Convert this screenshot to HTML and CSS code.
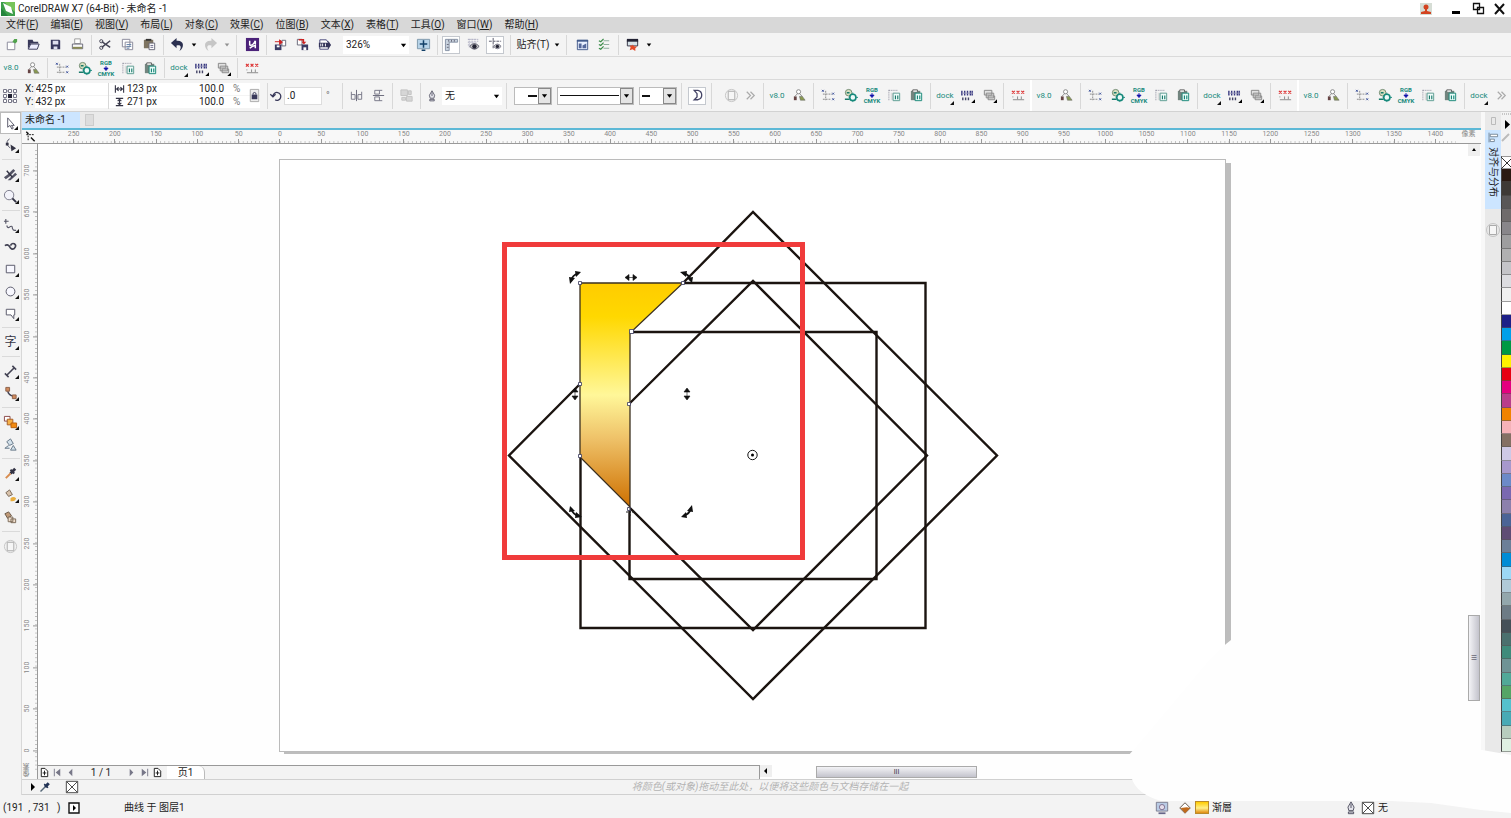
FILE: index.html
```html
<!DOCTYPE html>
<html lang="zh-CN">
<head>
<meta charset="utf-8">
<title>CorelDRAW X7 (64-Bit) - 未命名 -1</title>
<link rel="stylesheet" href="styles.css">
</head>
<body>
<svg class="sprite" aria-hidden="true">
  <symbol id="nodes" viewBox="0 0 16 16"><circle cx="7" cy="4" r="2.200" fill="#fff" stroke="#888"/><path d="M6 6L3 9M8 6l3 3" stroke="#888"/><rect x="2" y="9" width="3" height="4" fill="#644"/><path d="M8 9h3l3 4H9z" fill="#8a9a50" stroke="#666" stroke-width=".6"/></symbol>
  <symbol id="grid" viewBox="0 0 16 16"><path d="M5 3v10M2 6.500h10M2 12h8" stroke="#888" stroke-dasharray="2 1" fill="none"/><path d="M1 2l2 2m0-2L1 4M12 5l2 2m0-2l-2 2M12 11l2 2m0-2l-2 2" stroke="#3a4f9a" fill="none"/></symbol>
  <symbol id="gearr" viewBox="0 0 16 16"><circle cx="6" cy="5" r="3.500" fill="#d8dfc0" stroke="#6f8a70"/><path d="M4 5h3M2 12h5" stroke="#197a6a" stroke-width="1.500"/><circle cx="10.500" cy="10" r="3.300" fill="#eefaf8" stroke="#16897b" stroke-width="1.700"/><path d="M10.500 5v2M10.500 13v2M14 10h2M6 10h1" stroke="#16897b"/></symbol>
  <symbol id="arrow" viewBox="0 0 8 6"><path d="M4 0v3M1.500 2.500h5L4 5.500z" stroke="#11a" fill="#11a"/></symbol>
  <symbol id="ai1" viewBox="0 0 16 16"><path d="M2 2.500h9M2 2v11" stroke="#889" stroke-dasharray="1 1" fill="none"/><path d="M4 5h5v8H4z" fill="#ddd"/><path d="M6.500 5.500h7v8h-7z" fill="#eefaf8" stroke="#5b9b91"/><path d="M9 8v4M11.500 8v4" stroke="#197a6a" stroke-width="1.200"/></symbol>
  <symbol id="ai2" viewBox="0 0 16 16"><path d="M2 3h10v10H2z" fill="#72857f"/><path d="M4 4V2h5v2" fill="#fff" stroke="#555"/><path d="M6.500 5.500h7v8h-7z" fill="#e6faf6" stroke="#188678"/><path d="M9 8v4M11.500 8v4" stroke="#188678" stroke-width="1.200"/></symbol>
  <symbol id="bars" viewBox="0 0 16 16"><path d="M2 3v5M5 3v5M8 3v5M11 3v5M13 3v5" stroke="#36367f" stroke-width="1.500"/><path d="M2 5.500h12" stroke="#99b"/><path d="M3 10v3M6 10v3M9 10v3" stroke="#446" stroke-width="1.500"/><path d="M16 12v4h-4z"/></symbol>
  <symbol id="layers" viewBox="0 0 16 16"><path d="M2.500 2.500h8v5h-8zM4.500 5.500h8v5h-8zM6.500 8.500h7v4h-7z" fill="#e2e2e2" stroke="#888"/><path d="M16 12v4h-4z"/></symbol>
  <symbol id="xxx" viewBox="0 0 16 16"><path d="M1 3l3 3m0-3L1 6M6 3l3 3m0-3L6 6M11 3l3 3m0-3l-3 3" stroke="#d33" stroke-width="1.300" fill="none"/><path d="M2 12.500h12M7 9v3M11 9v3M2 9v1" stroke="#888"/></symbol>
  <symbol id="new" viewBox="0 0 16 16"><path d="M3.500 5.500h8v8h-8z" fill="#fff" stroke="#889"/><path d="M9 5l2-3 3 0 0 3-2 2z" fill="#51a34d"/></symbol>
  <symbol id="open" viewBox="0 0 16 16"><path d="M2 13V3h5l1 2h5v2H5z" fill="#39395a"/><path d="M2.500 13L5 7.500h9L12 13z" fill="#eef" stroke="#39395a"/></symbol>
  <symbol id="save" viewBox="0 0 16 16"><path d="M3 3h9l1 1v9H3z" fill="#34345a"/><path d="M5 4h6v4H5zM6 10h4v3H6z" fill="#dde"/></symbol>
  <symbol id="print" viewBox="0 0 16 16"><path d="M5 2h6v5H5z" fill="#fff" stroke="#999"/><path d="M2.500 7.500h11v5h-11z" fill="#f8f8f8" stroke="#667"/><path d="M3 11.500h10" stroke="#8a8b55" stroke-width="2"/></symbol>
  <symbol id="cut" viewBox="0 0 16 16"><path d="M4 5l9 6M4 11l9-7" stroke="#445" stroke-width="1.600"/><circle cx="3.500" cy="4.500" r="1.700" fill="none" stroke="#445"/><circle cx="3.500" cy="11.500" r="1.700" fill="none" stroke="#445"/></symbol>
  <symbol id="copy" viewBox="0 0 16 16"><path d="M2.500 2.500h8v8h-8zM5.500 5.500h8v8h-8z" fill="#fff" stroke="#889"/><path d="M7 8h5M7 10h5M7 12h3" stroke="#6482aa"/></symbol>
  <symbol id="paste" viewBox="0 0 16 16"><path d="M2 3h10v9H2z" fill="#7e7461"/><path d="M4 2h6v2H4z" fill="#333"/><path d="M7.500 6.500h6v7h-6z" fill="#fff" stroke="#667"/><path d="M9 9h3M9 11h3" stroke="#668"/></symbol>
  <symbol id="undo" viewBox="0 0 16 16"><path d="M7 1L1 6.500 7 12V9c4-1 6 1 3 6 6-4 5-12-3-11z" fill="currentColor"/></symbol>
  <symbol id="search" viewBox="0 0 16 16"><path d="M1 1h14v14H1z" fill="#4b2279"/><path d="M5 4v5M5 9q4 0 6-5M11 4v4M5 12q3-3 6-3v3" stroke="#fff" stroke-width="1.600" fill="none"/></symbol>
  <symbol id="import" viewBox="0 0 16 16"><path d="M9.500 3.500h4v6h-4z" fill="#fff" stroke="#667"/><path d="M2 8h7v6H2z" fill="#3b3b64"/><path d="M4 9h3v2H4z" fill="#fff"/><path d="M2 5h6M7 3l3 2.500L7 8z" stroke="#c22" fill="#c22"/></symbol>
  <symbol id="export" viewBox="0 0 16 16"><path d="M2.500 2.500h5v6h-5z" fill="#fff" stroke="#667"/><path d="M7 8h7v6H7z" fill="#3b3b64"/><path d="M9 11h3v3H9z" fill="#fff"/><path d="M4 3h5v3" stroke="#c22" fill="none" stroke-width="1.500"/><path d="M7 5h5L9.500 8z" fill="#c22"/></symbol>
  <symbol id="publish" viewBox="0 0 16 16"><path d="M3 3h7l2 3v7H3z" fill="#fff" stroke="#447"/><path d="M2 6h10V4l3 4.500L12 13v-2H2z" fill="#34345a"/><path d="M4 7v3M6 7v3M9 7v3" stroke="#fff"/></symbol>
  <symbol id="full" viewBox="0 0 16 16"><path d="M1.500 2.500h13v10h-13z" fill="#b7d3e8" stroke="#7d97ab"/><path d="M8 3.500v8M4 7.500h8M6 14h4" stroke="#124068" stroke-width="1.600"/></symbol>
  <symbol id="rulers" viewBox="0 0 16 16"><path d="M1.500 2.500h13v3h-9v9h-4z" fill="#c9d3df" stroke="#8490a3"/><path d="M5 3v2M8 3v2M11 3v2M3 8h2M3 11h2" stroke="#667"/></symbol>
  <symbol id="eye" viewBox="0 0 16 16"><path d="M2 2.500h10M2 5.500h10M3.500 2v9M6.500 2v6M9.500 2v4M12.500 2v4M2 8.500h3" stroke="#9b9bb5" stroke-dasharray="1 1"/><path d="M4 10q5-6 10 0-5 6-10 0z" fill="#ccc" stroke="#556"/><circle cx="9" cy="10" r="2.400" fill="#223"/></symbol>
  <symbol id="guide" viewBox="0 0 16 16"><path d="M5.500 1v12M1 4.500h13" stroke="#556" stroke-dasharray="3 1"/><path d="M6 10q4-5 8 0-4 5-8 0z" fill="#ccc" stroke="#778"/><circle cx="10" cy="10" r="1.800" fill="#223"/></symbol>
  <symbol id="options" viewBox="0 0 16 16"><path d="M2.500 3.500h11v10h-11z" fill="#e8f0ff" stroke="#445c8c"/><path d="M2 3h12v2H2z" fill="#445c8c"/><path d="M4 7h3v5H4zM8 9l4-2v5H8z" fill="#56699b"/></symbol>
  <symbol id="checks" viewBox="0 0 16 16"><path d="M2 4l2 1 3-3M2 8l2 1 3-3M2 12l2 1 3-3" stroke="#3a8c48" fill="none" stroke-width="1.300"/><path d="M7 4h6M7 8h6M7 12h6" stroke="#8a9"/></symbol>
  <symbol id="launch" viewBox="0 0 16 16"><path d="M2.500 3.500h11v6h-11z" fill="#d8e4ea" stroke="#334"/><path d="M2 2h12v3H2z" fill="#223"/><path d="M8 8l2 2 3 0-2 2 0 3-3-2-3 1 1-3-1-2h3z" fill="#e44b29"/></symbol>
  <symbol id="origin" viewBox="0 0 16 16"><path d="M3 3h10v10H3z" fill="none" stroke="#778" stroke-dasharray="1 1"/><path d="M6 6h4v4H6z" fill="#223"/><path d="M1.500 1.500h3v3h-3zM6.500 1.500h3v3h-3zM11.500 1.500h3v3h-3zM1.500 6.500h3v3h-3zM11.500 6.500h3v3h-3zM1.500 11.500h3v3h-3zM6.500 11.500h3v3h-3zM11.500 11.500h3v3h-3z" fill="#fff" stroke="#778"/></symbol>
  <symbol id="wide" viewBox="0 0 12 10"><path d="M1.500 1v8M10.500 1v8M2 5h8M5 3L3 5l2 2M7 3l2 2-2 2" stroke="#334" fill="none" stroke-width="1.200"/></symbol>
  <symbol id="tall" viewBox="0 0 12 10"><path d="M2 1h8M2 9h8M6 1v8M4 4l2-2 2 2M4 6l2 2 2-2" stroke="#334" fill="none" stroke-width="1.200"/></symbol>
  <symbol id="lock" viewBox="0 0 16 16"><path d="M3.500 1.500h9v13h-9z" fill="#ececec" stroke="#aaa"/><path d="M5 7h6v5H5z" fill="#39395a"/><path d="M6.500 7V5.500q1.500-1.500 3 0V7" fill="none" stroke="#39395a"/></symbol>
  <symbol id="rotate" viewBox="0 0 16 16"><path d="M4.500 8A4.500 4.500 0 1 1 7 12.500M1.500 6l3 3 3-3" stroke="#39395a" fill="none" stroke-width="1.500"/></symbol>
  <symbol id="mirror" viewBox="0 0 16 16"><path d="M2.500 4v8h4V7h-4M13.500 4v8h-4V7h4" stroke="#778" fill="none"/><path d="M8 2v12" stroke="#667"/></symbol>
  <symbol id="order" viewBox="0 0 16 16"><path d="M2 2h7v6H2zM8 9h6v5H8zM10 3h3v4h-3zM3 10h4v3H3z" fill="#d6d6d6" stroke="#c2c2c2"/></symbol>
  <symbol id="pen" viewBox="0 0 16 16"><path d="M8 1L4.500 7l1 4h5l1-4zM5 12.500h6v2H5zM8 3v5" fill="#e3e3ea" stroke="#445"/></symbol>
  <symbol id="close" viewBox="0 0 16 16"><path d="M4.500 2.500h4q4 1 4 5t-4 5h-4l3-3V6z" fill="none" stroke="#446" stroke-width="1.400"/></symbol>
  <symbol id="plus" viewBox="0 0 16 16"><circle cx="8" cy="8" r="6.500" fill="none" stroke="#c4c4c4"/><path d="M4.500 3.500h7v9h-7z" fill="#f6f6f6" stroke="#aaa"/></symbol>
  <symbol id="more" viewBox="0 0 16 16"><path d="M4 4l4 4-4 4M8 4l4 4-4 4" fill="none" stroke="#aaa" stroke-width="1.300"/></symbol>
  <symbol id="down" viewBox="0 0 8 8"><path d="M1 2h6L4 6z"/></symbol>
  <symbol id="pick" viewBox="0 0 16 16"><path d="M5 2v10l2.500-2 2 4 1.500-1-2-3h3z" fill="#fff" stroke="#556"/></symbol>
  <symbol id="shape" viewBox="0 0 16 16"><path d="M7 1q-4 2-2 7l3 3" fill="none" stroke="#556"/><path d="M3 5h3v3H3zM8 7l6 4-5 3z" fill="#334"/></symbol>
  <symbol id="smear" viewBox="0 0 16 16"><path d="M1 11l4-3 6-6 2 2-6 6-4 3zM5 14l8-8 2 2-7 6z" fill="#556"/><path d="M4 4l6 7" stroke="#334" stroke-width="1.500"/></symbol>
  <symbol id="zoom" viewBox="0 0 16 16"><circle cx="6.500" cy="6.500" r="5" fill="#f3f3fa" stroke="#778"/><path d="M10 10l4 4" stroke="#334" stroke-width="2"/></symbol>
  <symbol id="free" viewBox="0 0 16 16"><path d="M3 1v5M1 3.500h5M4 8q1 4 4 1 2-1 2 2 1 3 4 2" stroke="#556" fill="none" stroke-width="1.200"/></symbol>
  <symbol id="artistic" viewBox="0 0 16 16"><path d="M2 6q3-2 5 1 2 4 5 2 3-3 0-5-3-1-4 2" stroke="#445" fill="none" stroke-width="1.800"/></symbol>
  <symbol id="rect" viewBox="0 0 16 16"><path d="M3.500 3.500h9v8h-9z" fill="#f8f8ff" stroke="#556"/></symbol>
  <symbol id="ellipse" viewBox="0 0 16 16"><circle cx="8" cy="8" r="4.700" fill="#f8f8ff" stroke="#556"/></symbol>
  <symbol id="callout" viewBox="0 0 16 16"><path d="M3.500 3.500h9v6h-1v4l-3-4h-5z" fill="#fff" stroke="#556"/></symbol>
  <symbol id="measure" viewBox="0 0 16 16"><path d="M4 12l8-8M2 10l4 4M10 2l4 4" stroke="#445" stroke-width="1.700"/></symbol>
  <symbol id="connect" viewBox="0 0 16 16"><path d="M5 4q0 6 7 7" stroke="#445" fill="none" stroke-width="1.500"/><path d="M3 1.500h4v4H3zM10 9.500h4v4h-4z" fill="#d08a5c" stroke="#8b6049"/></symbol>
  <symbol id="blend" viewBox="0 0 16 16"><path d="M1.500 1.500h6v5h-6z" fill="#fff" stroke="#844"/><path d="M4.500 4.500h6v6h-6z" fill="#f5b24a" stroke="#a65b22"/><path d="M8.500 8.500h6v5h-6z" fill="#f18a11" stroke="#b55e0b"/></symbol>
  <symbol id="glass" viewBox="0 0 16 16"><path d="M4 5l4-3 3 5-4 2zM6 9l-4 3h5M11 9l-3 5h6z" fill="#d2e0ea" stroke="#678"/></symbol>
  <symbol id="dropper" viewBox="0 0 16 16"><path d="M8 8l5-5" stroke="#334" stroke-width="3"/><path d="M8 4l4 4" stroke="#334" stroke-width="2"/><path d="M3 13l5-5" stroke="#d88b4d" stroke-width="2"/></symbol>
  <symbol id="dropper-dark" viewBox="0 0 16 16"><path d="M8 8l5-5" stroke="#235" stroke-width="4"/><path d="M7 4l5 5" stroke="#235" stroke-width="2"/><path d="M2 14l6-6" stroke="#567" stroke-width="2"/></symbol>
  <symbol id="fill" viewBox="0 0 16 16"><path d="M3 5l4-3 3 5-4 2z" fill="#d8c2ab" stroke="#765"/><path d="M8 11q3-3 6 0-1 4-6 3z" fill="#e9ad3c"/></symbol>
  <symbol id="smart" viewBox="0 0 16 16"><path d="M2 4l4-2 3 4-4 3z" fill="#c09a78" stroke="#654"/><path d="M5.500 7.500h5v5h-5zM8.500 9.500h5v4h-5z" fill="#f1dfcd" stroke="#765"/></symbol>
  <symbol id="align" viewBox="0 0 16 16"><path d="M2 13.500h12M4 3h3v9H4zM10 7h3v5h-3z" stroke="#678" fill="#fff"/></symbol>
  <symbol id="addpage" viewBox="0 0 12 12"><path d="M2.500 1.500h4l3 3v6h-7zM6 4v5M4 6.500h4" fill="#fff" stroke="#111"/></symbol>
  <symbol id="none" viewBox="0 0 16 16"><path d="M1.500 1.500h13v13h-13zM2 2l12 12M14 2L2 14" fill="#fff" stroke="#333"/></symbol>
  <symbol id="first" viewBox="0 0 12 12"><path d="M2 2h1v8H2zM9 2v8L4 6z" fill="#778"/></symbol>
  <symbol id="prev" viewBox="0 0 12 12"><path d="M8 2v8L4 6z" fill="#778"/></symbol>
  <symbol id="bucket" viewBox="0 0 16 16"><path d="M2 8l6-6 6 6-6 6z" fill="#fff" stroke="#543"/><path d="M3 8l7-1 4 1-6 6z" fill="#c06a1c"/></symbol>
  <symbol id="monitor" viewBox="0 0 16 16"><path d="M1.500 1.500h13v10h-13z" fill="#b9cbe5" stroke="#778"/><circle cx="8" cy="7" r="3" fill="#e5ddea" stroke="#768"/><path d="M4 14h8" stroke="#668" stroke-width="2"/></symbol>
</svg>

<header class="title-bar">
  <svg class="logo" viewBox="0 0 14 14"><path d="M0 0h14v14H0z" fill="#3c9e4b"/><path d="M3 0l11 10V0z" fill="#77c45a"/><path d="M2 1l8 4 2 7-7-3z" fill="#fff"/><path d="M0 6l7 8H0z" fill="#23843c"/></svg>
  <h1>CorelDRAW X7 (64-Bit) - 未命名 -1</h1>
  <button class="win user" aria-label="用户"><svg viewBox="0 0 14 14"><path d="M1 1h12v12H1z" fill="#d6ddd5"/><circle cx="7" cy="5" r="2.500" fill="#d34320"/><path d="M6 7h2v2l4 1v2H2v-2l4-1z" fill="#d34320"/></svg></button>
  <button class="win" aria-label="最小化"><svg viewBox="0 0 14 14"><path d="M3 9h8v3H3z"/></svg></button>
  <button class="win" aria-label="还原"><svg viewBox="0 0 14 14"><path d="M2.500 1.500h6v6h-6zM6.500 5.500h6v6h-6z" fill="#fff" stroke="#111" stroke-width="1.300"/></svg></button>
  <button class="win" aria-label="关闭"><svg viewBox="0 0 14 14"><path d="M2 2l9 10M11 2L2 12" stroke="#111" stroke-width="2"/></svg></button>
</header>

<nav class="menu">
  <button>文件(<u>F</u>)</button><button>编辑(<u>E</u>)</button><button>视图(<u>V</u>)</button><button>布局(<u>L</u>)</button><button>对象(<u>C</u>)</button><button>效果(<u>C</u>)</button><button>位图(<u>B</u>)</button><button>文本(<u>X</u>)</button><button>表格(<u>T</u>)</button><button>工具(<u>O</u>)</button><button>窗口(<u>W</u>)</button><button>帮助(<u>H</u>)</button>
</nav>

<div class="bar standard">
  <button class="ib" aria-label="新建"><svg><use href="#new"/></svg></button><button class="ib" aria-label="打开"><svg><use href="#open"/></svg></button><button class="ib" aria-label="保存"><svg><use href="#save"/></svg></button><button class="ib" aria-label="打印"><svg><use href="#print"/></svg></button><i class="sep"></i>
  <button class="ib" aria-label="剪切"><svg><use href="#cut"/></svg></button><button class="ib" aria-label="复制"><svg><use href="#copy"/></svg></button><button class="ib" aria-label="粘贴"><svg><use href="#paste"/></svg></button><i class="sep"></i>
  <button class="ib undo" aria-label="撤消"><svg><use href="#undo"/></svg></button><button class="caret" aria-label="撤消列表"><svg><use href="#down"/></svg></button><button class="ib redo" aria-label="重做"><svg><use href="#undo"/></svg></button><button class="caret dim" aria-label="重做列表"><svg><use href="#down"/></svg></button><i class="sep wide"></i>
  <button class="ib" aria-label="搜索内容"><svg><use href="#search"/></svg></button><i class="sep"></i>
  <button class="ib" aria-label="导入"><svg><use href="#import"/></svg></button><button class="ib" aria-label="导出"><svg><use href="#export"/></svg></button><button class="ib" aria-label="发布"><svg><use href="#publish"/></svg></button>
  <span class="combo zoom-level"><select aria-label="缩放级别"><option>326%</option></select><svg><use href="#down"/></svg></span>
  <button class="ib" aria-label="全屏预览"><svg><use href="#full"/></svg></button><i class="sep"></i>
  <button class="ib on" aria-label="显示标尺"><svg><use href="#rulers"/></svg></button><button class="ib" aria-label="显示网格"><svg><use href="#eye"/></svg></button><button class="ib on" aria-label="显示辅助线"><svg><use href="#guide"/></svg></button><i class="sep wide"></i>
  <button class="snap">贴齐(T)</button><button class="caret" aria-label="贴齐列表"><svg><use href="#down"/></svg></button><i class="sep wide"></i>
  <button class="ib" aria-label="选项"><svg><use href="#options"/></svg></button><button class="ib" aria-label="选项列表"><svg><use href="#checks"/></svg></button><i class="sep"></i>
  <button class="ib" aria-label="应用程序启动器"><svg><use href="#launch"/></svg></button><button class="caret" aria-label="启动器列表"><svg><use href="#down"/></svg></button>
</div>

<div class="bar plugins">
  <div class="group"><button class="ib word">v8.0</button><button class="ib" aria-label="节点"><svg><use href="#nodes"/></svg></button><i class="sep"></i><button class="ib" aria-label="网格"><svg><use href="#grid"/></svg></button><button class="ib" aria-label="设置"><svg><use href="#gearr"/></svg></button><button class="ib rgb"><span>RGB</span><svg><use href="#arrow"/></svg><span>CMYK</span></button><button class="ib" aria-label="复制 AI"><svg><use href="#ai1"/></svg></button><button class="ib" aria-label="粘贴 AI"><svg><use href="#ai2"/></svg></button><i class="sep"></i><button class="ib word fly">dock</button><button class="ib" aria-label="条码"><svg><use href="#bars"/></svg></button><button class="ib" aria-label="图层"><svg><use href="#layers"/></svg></button><i class="sep"></i><button class="ib" aria-label="标记"><svg><use href="#xxx"/></svg></button></div>
</div>

<div class="bar property">
  <svg class="origin"><use href="#origin"/></svg>
  <div class="pair pos"><label>X: <input value="425 px"></label><label>Y: <input value="432 px"></label></div><i class="sep"></i>
  <div class="pair size"><label><svg><use href="#wide"/></svg><input value="123 px" aria-label="宽度"></label><label><svg><use href="#tall"/></svg><input value="271 px" aria-label="高度"></label></div>
  <div class="pair scale"><label><input value="100.0"><span>%</span></label><label><input value="100.0"><span>%</span></label></div>
  <button class="ib" aria-label="锁定比率"><svg><use href="#lock"/></svg></button><i class="sep slim"></i>
  <label class="angle"><svg><use href="#rotate"/></svg><input value=".0" aria-label="旋转角度"><span>°</span></label><i class="sep"></i>
  <button class="ib" aria-label="水平镜像"><svg><use href="#mirror"/></svg></button><button class="ib turned" aria-label="垂直镜像"><svg><use href="#mirror"/></svg></button><i class="sep"></i>
  <button class="ib" aria-label="顺序"><svg><use href="#order"/></svg></button><i class="sep"></i>
  <svg class="pen"><use href="#pen"/></svg>
  <span class="combo outline"><select aria-label="轮廓宽度"><option>无</option></select><svg><use href="#down"/></svg></span><i class="sep wide"></i>
  <span class="combo boxed start"><select aria-label="起始箭头"></select><svg><use href="#down"/></svg></span>
  <span class="combo boxed line"><select aria-label="线条样式"></select><svg><use href="#down"/></svg></span>
  <span class="combo boxed end"><select aria-label="终止箭头"></select><svg><use href="#down"/></svg></span><i class="sep wide"></i>
  <button class="ib on" aria-label="闭合曲线"><svg><use href="#close"/></svg></button><i class="sep"></i>
  <button class="ib add" aria-label="快速自定义"><svg><use href="#plus"/></svg></button><button class="ib narrow" aria-label="更多"><svg><use href="#more"/></svg></button><i class="sep"></i>
  <div class="group"><button class="ib word">v8.0</button><button class="ib" aria-label="节点"><svg><use href="#nodes"/></svg></button><i class="sep"></i><button class="ib" aria-label="网格"><svg><use href="#grid"/></svg></button><button class="ib" aria-label="设置"><svg><use href="#gearr"/></svg></button><button class="ib rgb"><span>RGB</span><svg><use href="#arrow"/></svg><span>CMYK</span></button><button class="ib" aria-label="复制 AI"><svg><use href="#ai1"/></svg></button><button class="ib" aria-label="粘贴 AI"><svg><use href="#ai2"/></svg></button><i class="sep"></i><button class="ib word fly">dock</button><button class="ib" aria-label="条码"><svg><use href="#bars"/></svg></button><button class="ib" aria-label="图层"><svg><use href="#layers"/></svg></button><i class="sep"></i><button class="ib" aria-label="标记"><svg><use href="#xxx"/></svg></button></div><i class="sep white"></i>
  <div class="group"><button class="ib word">v8.0</button><button class="ib" aria-label="节点"><svg><use href="#nodes"/></svg></button><i class="sep"></i><button class="ib" aria-label="网格"><svg><use href="#grid"/></svg></button><button class="ib" aria-label="设置"><svg><use href="#gearr"/></svg></button><button class="ib rgb"><span>RGB</span><svg><use href="#arrow"/></svg><span>CMYK</span></button><button class="ib" aria-label="复制 AI"><svg><use href="#ai1"/></svg></button><button class="ib" aria-label="粘贴 AI"><svg><use href="#ai2"/></svg></button><i class="sep"></i><button class="ib word fly">dock</button><button class="ib" aria-label="条码"><svg><use href="#bars"/></svg></button><button class="ib" aria-label="图层"><svg><use href="#layers"/></svg></button><i class="sep"></i><button class="ib" aria-label="标记"><svg><use href="#xxx"/></svg></button></div><i class="sep white"></i>
  <div class="group"><button class="ib word">v8.0</button><button class="ib" aria-label="节点"><svg><use href="#nodes"/></svg></button><i class="sep"></i><button class="ib" aria-label="网格"><svg><use href="#grid"/></svg></button><button class="ib" aria-label="设置"><svg><use href="#gearr"/></svg></button><button class="ib rgb"><span>RGB</span><svg><use href="#arrow"/></svg><span>CMYK</span></button><button class="ib" aria-label="复制 AI"><svg><use href="#ai1"/></svg></button><button class="ib" aria-label="粘贴 AI"><svg><use href="#ai2"/></svg></button><i class="sep"></i><button class="ib word fly">dock</button></div>
  <button class="ib last" aria-label="更多按钮"><svg><use href="#more"/></svg></button>
</div>

<main class="workspace">
  <aside class="toolbox">
    <button class="tool on fly" aria-label="选择"><svg><use href="#pick"/></svg></button><button class="tool fly" aria-label="形状"><svg><use href="#shape"/></svg></button><i></i>
    <button class="tool fly" aria-label="裁剪"><svg><use href="#smear"/></svg></button><button class="tool fly" aria-label="缩放"><svg><use href="#zoom"/></svg></button><i></i>
    <button class="tool fly" aria-label="手绘"><svg><use href="#free"/></svg></button><button class="tool" aria-label="艺术笔"><svg><use href="#artistic"/></svg></button><button class="tool fly" aria-label="矩形"><svg><use href="#rect"/></svg></button><button class="tool fly" aria-label="椭圆形"><svg><use href="#ellipse"/></svg></button><button class="tool fly" aria-label="标注"><svg><use href="#callout"/></svg></button><i></i>
    <button class="tool fly type" aria-label="文本">字</button><i></i>
    <button class="tool fly" aria-label="度量"><svg><use href="#measure"/></svg></button><button class="tool fly" aria-label="连接器"><svg><use href="#connect"/></svg></button><i></i>
    <button class="tool fly" aria-label="调和"><svg><use href="#blend"/></svg></button><button class="tool" aria-label="透明度"><svg><use href="#glass"/></svg></button><i></i>
    <button class="tool fly" aria-label="滴管"><svg><use href="#dropper"/></svg></button><button class="tool fly" aria-label="交互式填充"><svg><use href="#fill"/></svg></button><button class="tool" aria-label="智能填充"><svg><use href="#smart"/></svg></button><i></i>
    <button class="tool" aria-label="自定义"><svg><use href="#plus"/></svg></button>
  </aside>

  <section class="document">
    <div class="tabs"><button class="tab">未命名 -1</button><button class="tab-add" aria-label="新建文档"></button></div>
    <div class="ruler-row">
      <svg class="corner" viewBox="0 0 16 14"><path d="M6 3v9M4 5h9" stroke="#111" stroke-dasharray="2 1"/><path d="M9 8l4 4M4 2l2 2" stroke="#111" stroke-width="1.500"/></svg>
      <div class="ruler-x"><span>250</span><span>200</span><span>150</span><span>100</span><span>50</span><span>0</span><span>50</span><span>100</span><span>150</span><span>200</span><span>250</span><span>300</span><span>350</span><span>400</span><span>450</span><span>500</span><span>550</span><span>600</span><span>650</span><span>700</span><span>750</span><span>800</span><span>850</span><span>900</span><span>950</span><span>1000</span><span>1050</span><span>1100</span><span>1150</span><span>1200</span><span>1250</span><span>1300</span><span>1350</span><span>1400</span></div>
      <span class="unit">像素</span>
    </div>
    <div class="stage">
      <div class="ruler-side">
        <div class="ruler-y"><span>700</span><span>650</span><span>600</span><span>550</span><span>500</span><span>450</span><span>400</span><span>350</span><span>300</span><span>250</span><span>200</span><span>150</span><span>100</span><span>50</span><span>0</span></div>
        <span class="unit unit-y">像素</span>
      </div>
      <div class="view">
        <div class="canvas-row">
          <svg class="canvas" viewBox="38 144 1430 621">
            <defs>
              <linearGradient id="gold" x1="0" y1="0" x2="0" y2="1"><stop offset="0" stop-color="#ffcc00"/><stop offset=".15" stop-color="#ffd800"/><stop offset=".5" stop-color="#fff799"/><stop offset=".7" stop-color="#eec067"/><stop offset="1" stop-color="#ce7000"/></linearGradient>
              <g id="turn"><path d="M-4 4Q-3-2 4-4" fill="none" stroke="#111" stroke-width="1.800"/><path d="M-6 0l6 1-5 6zM0-6l6 1-5 5z" fill="#111"/></g>
              <path id="skew" d="M-6 0l4-3v6zM6 0l-4-3v6zM-3 0h6" fill="#111" stroke="#111" stroke-width=".6"/>
            </defs>
            <path d="M284 754H1231V163H1226V752H284z" fill="#bdbdbd"/>
            <rect x="279.500" y="159.500" width="946" height="592" fill="#fff" stroke="#bbb"/>
            <g fill="none" stroke="#1b1410" stroke-width="2.400">
              <path d="M683 283H925.500V628H580.500V457"/>
              <path d="M630 332H876.500V579H629.500V507"/>
              <path d="M580 384L509 455.500 753 699 997 455.500 753 212 683 283"/>
              <path d="M629 404L753 281 927 455.500 753 630 629 507"/>
            </g>
            <path d="M580 283H683L630 333V507L580 457z" fill="url(#gold)" stroke="#3b3020" stroke-width="1.300"/>
            <g fill="#fff" stroke="#39395a" stroke-width=".8"><path d="M578.500 281.500h3v3h-3zM681.500 281.500h3v3h-3zM629.500 329.500h4v4h-4zM578.500 382.500h3v3h-3zM627.500 402.500h3v3h-3zM578.500 454.500h3v3h-3zM627.500 507.500h3v3h-3z"/></g>
            <use href="#turn" x="575" y="277"/><use href="#turn" transform="translate(687 277) rotate(90)"/><use href="#turn" transform="translate(687 512) rotate(180)"/><use href="#turn" transform="translate(575 512) rotate(270)"/>
            <use href="#skew" x="631" y="277.500"/><use href="#skew" transform="translate(687 394) rotate(90)"/><use href="#skew" transform="translate(575 394) rotate(90)"/>
            <path d="M626 512h9M630 508v8" stroke="#222" stroke-dasharray="2 1"/>
            <circle cx="752.500" cy="455" r="4.700" fill="#fff" stroke="#111"/><circle cx="752.500" cy="455" r="1.500"/>
            <rect x="504.500" y="244.500" width="298" height="313" fill="none" stroke="#f03b3b" stroke-width="5"/>
          </svg>
          <div class="vscroll"><button class="sb-btn" aria-label="向上滚动"><svg viewBox="0 0 12 12"><path d="M4 7h4L6 4z"/></svg></button><div class="thumb">≡</div></div>
        </div>
        <div class="pages">
          <div class="page-nav">
            <button aria-label="前面加页"><svg><use href="#addpage"/></svg></button><button aria-label="首页"><svg><use href="#first"/></svg></button><button aria-label="上一页"><svg><use href="#prev"/></svg></button><span class="count">1 / 1</span><button class="flip" aria-label="下一页"><svg><use href="#prev"/></svg></button><button class="flip" aria-label="末页"><svg><use href="#first"/></svg></button><button aria-label="后面加页"><svg><use href="#addpage"/></svg></button>
            <button class="page-tab">页1</button>
          </div>
          <div class="hscroll"><button class="sb-btn" aria-label="向左滚动"><svg viewBox="0 0 12 12"><path d="M7 3v6L4 6z"/></svg></button><div class="thumb">III</div></div>
        </div>
      </div>
    </div>
    <div class="doc-palette"><button aria-label="文档调色板菜单"><svg viewBox="0 0 12 12"><path d="M4 2v8l4-4z"/></svg></button><svg><use href="#dropper-dark"/></svg><button class="nocolor" aria-label="无颜色"><svg><use href="#none"/></svg></button><p>将颜色(或对象)拖动至此处，以便将这些颜色与文档存储在一起</p></div>
  </section>

  <aside class="dockers"><svg class="grip" viewBox="0 0 8 10"><path d="M2.500 1.500h4v7h-4z" fill="none" stroke="#bbb"/></svg><button class="docker"><svg><use href="#align"/></svg><span>对齐与分布</span></button><button class="docker-add" aria-label="添加泊坞窗"><svg><use href="#plus"/></svg></button></aside>

  <aside class="palette">
    <div class="pal-head"><svg viewBox="0 0 10 44"><path d="M1 2h9" stroke="#999" stroke-dasharray="1 1"/><path d="M4 8v9l5-4.500z"/><path d="M1 29l7-7" stroke="#bbb" stroke-width="2"/></svg></div>
    <svg class="pal-none" viewBox="0 0 10 13"><path d="M0 0h14v13H0zM0 1l12 12M12 1L0 13" fill="#fff" stroke="#333"/></svg>
    <b style="background:#2a1a12"></b><b style="background:#3e3a36"></b><b style="background:#595757"></b><b style="background:#6f6b6b"></b><b style="background:#88868a"></b><b style="background:#9e9e9f"></b><b style="background:#b0b0b1"></b><b style="background:#c4c4c8"></b><b style="background:#dcdce0"></b><b style="background:#f0f0f0"></b><b style="background:#fff"></b><b style="background:#1d2088"></b><b style="background:#00a0e9"></b><b style="background:#009944"></b><b style="background:#fff100"></b><b style="background:#e60012"></b><b style="background:#e4007f"></b><b style="background:#b93e8b"></b><b style="background:#f08300"></b><b style="background:#f5b2b8"></b><b style="background:#847064"></b><b style="background:#cec9e6"></b><b style="background:#a798cc"></b><b style="background:#6c8ac8"></b><b style="background:#7a68b0"></b><b style="background:#8c80ac"></b><b style="background:#4b6496"></b><b style="background:#5f4c74"></b><b style="background:#6c7f98"></b><b style="background:#008cd6"></b><b style="background:#9cd8f5"></b><b style="background:#b0cad8"></b><b style="background:#93a7ac"></b><b style="background:#6d7b85"></b><b style="background:#455058"></b><b style="background:#4b706e"></b><b style="background:#3f8b7b"></b><b style="background:#6f9395"></b><b style="background:#51a898"></b><b style="background:#55a566"></b><b style="background:#55c1cd"></b><b style="background:#48aab5"></b><b style="background:#b7cdbe"></b><b style="background:#dff0e2"></b>
  </aside>
</main>

<footer class="status">
  <span class="coords">(191&nbsp; , 731 &nbsp; )</span><button class="play" aria-label="状态选项"><svg viewBox="0 0 12 12"><path d="M1 1h10v10H1z" fill="#fff" stroke="#111" stroke-width="1.400"/><path d="M5 3v6l3-3z"/></svg></button>
  <span class="object">曲线 于 图层1</span>
  <div class="attrs"><svg><use href="#monitor"/></svg><svg class="bucket"><use href="#bucket"/></svg><span class="gold"></span><span class="fill-name">渐層</span><svg><use href="#pen"/></svg><svg><use href="#none"/></svg><span>无</span></div>
</footer>

<svg class="cloud" viewBox="0 0 390 180" aria-hidden="true"><path d="M6 119L16 108 90 20 105 6 110 2V0H346V112L361 112 390 117V175L360 172 310 165 270 163H40Q16 156 11 141z" fill="#fefefe"/></svg>
</body>
</html>
```
FILE: styles.css
```css
* { box-sizing: border-box; }
html, body { height: 100%; }
body {
  margin: 0; display: flex; flex-direction: column; overflow: hidden; position: relative;
  background: #f3f3f3; color: #222;
  font: 10px/14px Roboto, "Noto Sans CJK SC", sans-serif;
}
button, input, select { font: inherit; color: inherit; margin: 0; padding: 0; border: 0; background: none; border-radius: 0; }
button { display: flex; align-items: center; justify-content: center; flex: none; }
svg { display: block; flex: none; width: 16px; height: 16px; }
.sprite { position: absolute; width: 0; height: 0; }

.title-bar { display: flex; align-items: center; height: 17px; flex: none; background: #fff; padding-left: 1px; }
.title-bar h1 { flex: 1; margin: 0 0 0 3px; font-size: 10px; font-weight: normal; }
.logo { width: 14px; height: 14px; }
.win { width: 22px; }
.win svg { width: 14px; height: 14px; }
.user { margin-right: 8px; }

.menu { display: flex; height: 16px; flex: none; gap: 12px; padding-left: 6px; background: #d8d8d8; }

.bar { display: flex; align-items: center; flex: none; border-bottom: 1px solid #dadada; background: #f4f4f4; overflow: hidden; }
.standard { height: 24px; }
.plugins { height: 23px; }
.property { height: 32px; border-color: #d2d2d2; }
.group { display: flex; align-items: center; flex: none; }
.ib { position: relative; width: 22px; height: 18px; }
.ib svg { width: 15px; height: 15px; }
.ib.on { width: 18px; margin: 0 2px; background: #fff; border: 1px solid #c4c8ce; }
.word { font-size: 8px; line-height: 12px; color: #16897b; }
.rgb { flex-direction: column; font-size: 6px; line-height: 6px; font-weight: bold; color: #16897b; }
.rgb svg { width: 8px; height: 5px; }
.sep { width: 6px; height: 20px; flex: none; background: linear-gradient(#d8d8d8, #d8d8d8) center / 1px 100% no-repeat; }
.property .sep { height: 26px; }
.group .sep { width: 7px; }
.sep.wide { width: 9px; }
.sep.slim { width: 4px; }
.property .sep.white { width: 4px; height: 32px; background: linear-gradient(#fff, #fff) center / 2px 100% no-repeat; }
.caret { width: 11px; height: 18px; }
.caret svg { width: 6px; height: 6px; }
.undo { color: #2b3050; }
.redo { color: #c6c6c6; }
.redo svg { transform: scaleX(-1); }
.dim { opacity: .4; }
.snap { width: 36px; }

.combo { position: relative; display: flex; flex: none; background: #fff; height: 18px; }
.combo select { appearance: none; width: 100%; padding-left: 3px; outline: 0; }
.combo svg { position: absolute; right: 2px; top: 6px; width: 7px; height: 7px; pointer-events: none; }
.zoom-level { width: 66px; margin: 0 3px 0 8px; }
.outline { width: 60px; }
.boxed { border: 1px solid #bbb; margin-right: 5px; }
.boxed svg { right: 0; top: 0; width: 13px; height: 16px; padding: 3px 2px; background: #e4e4e4; border: 1px solid #888; }
.start { width: 38px; margin-left: 3px; }
.line { width: 77px; }
.end { width: 38px; margin-right: 0; }
.start select { background: linear-gradient(#111, #111) 13px center / 9px 2px no-repeat; }
.line select { background: linear-gradient(#111, #111) 2px center / 59px 1px no-repeat; }
.end select { background: linear-gradient(#111, #111) 2px center / 8px 2px no-repeat; }

.origin { margin: 0 7px 0 2px; }
.pair { display: grid; gap: 1px; flex: none; }
.pair label { display: flex; align-items: center; height: 12px; gap: 2px; }
.pair input { height: 12px; background: #fff; min-width: 0; }
.pair svg { width: 11px; height: 10px; }
.pos { width: 77px; margin-right: 3px; }
.pos input { flex: 1; }
.size { width: 80px; margin: 0 5px 0 3px; }
.size input { flex: 1; }
.scale { width: 44px; }
.scale input { width: 30px; }
.scale span { color: #777; margin-left: 2px; }
.angle { display: flex; align-items: center; gap: 1px; width: 70px; flex: none; }
.angle input { width: 38px; height: 18px; background: #fff; border: 1px solid #ddd; padding-left: 2px; }
.angle svg { width: 14px; height: 14px; }
.angle span { color: #777; margin-left: 3px; }
.turned svg { transform: rotate(90deg); }
.pen { width: 12px; height: 14px; margin: 0 4px 0 3px; }
.add { margin-left: 6px; }
.narrow { width: 16px; margin-right: 2px; }
.last { margin-left: auto; }

.workspace { flex: 1; min-height: 0; display: flex; }
.toolbox { width: 22px; flex: none; border-right: 1px solid #d8d8d8; }
.toolbox i { display: block; height: 7px; background: linear-gradient(#dadada, #dadada) center / 18px 1px no-repeat; }
.tool { position: relative; width: 21px; height: 22px; }
.tool svg { width: 15px; height: 15px; }
.tool.on { background: #fff; border: 1px solid #bbb; }
.fly::after { content: ""; position: absolute; right: 2px; bottom: 3px; border: 2px solid #111; border-top-color: transparent; border-left-color: transparent; }
.word.fly::after { bottom: 0; }
.type { font-size: 12px; color: #334; }

.document { flex: 1; min-width: 0; display: flex; flex-direction: column; }
.tabs { display: flex; height: 18px; flex: none; background: #eaeaea; border-bottom: 2px solid #5cb8d6; }
.tab { width: 58px; padding-left: 3px; justify-content: flex-start; background: #cce5ff; }
.tab-add { width: 9px; height: 12px; margin: 2px 5px; background: #ddd; border: 1px solid #ccc; }
.ruler-row { display: flex; height: 14px; flex: none; background: #f8f8f8; color: #888; font-size: 7px; line-height: 9px; border-bottom: 1px solid #999; }
.corner { width: 16px; height: 13px; }
.ruler-x { flex: 1; display: grid; grid-auto-flow: column; grid-auto-columns: 1fr; margin-left: 15px; text-align: center;
  background: linear-gradient(90deg, #bbb 25%, transparent 25%) 0 100% / calc(100% / 340) 2px repeat-x; }
.ruler-x span { background: linear-gradient(#999, #999) center bottom / 1px 4px no-repeat; }
.unit { width: 25px; text-align: center; }
.stage { flex: 1; min-height: 0; display: flex; }
.ruler-side { position: relative; width: 16px; flex: none; padding: 6px 0 8px; background: #f8f8f8; color: #888; font-size: 7px; line-height: 11px; border-right: 1px solid #999; }
.ruler-y { height: 100%; display: grid; grid-auto-rows: 1fr;
  background: linear-gradient(#bbb 25%, transparent 25%) 100% 0 / 2px calc(100% / 150) repeat-y; }
.ruler-y span, .unit-y { writing-mode: vertical-rl; transform: rotate(180deg); text-align: center; }
.ruler-y span { width: 15px; padding-left: 4px; background: linear-gradient(#999, #999) left center / 4px 1px no-repeat; }
.unit-y { position: absolute; left: 0; bottom: 2px; width: 11px; background: #f8f8f8; }
.view { flex: 1; min-width: 0; display: flex; flex-direction: column; }
.canvas-row { flex: 1; min-height: 0; display: flex; background: #fefefe; }
.canvas { flex: 1; min-width: 0; height: 100%; }
.vscroll { width: 13px; flex: none; display: grid; grid-template-rows: 13px 1fr 86px 64px; }
.vscroll .thumb { grid-row: 3; }
.sb-btn { width: 12px; height: 12px; background: #efefef; }
.sb-btn svg { width: 12px; height: 12px; }
.thumb { display: grid; place-items: center; font-size: 7px; line-height: 9px; color: #334; border: 1px solid #aaa; width: 12px; background: linear-gradient(90deg, #f3f3f6, #c3c3cc); }
.pages { display: flex; height: 14px; flex: none; }
.page-nav { width: 722px; flex: none; display: flex; align-items: center; border-top: 1px solid #999; border-right: 1px solid #999; }
.page-nav button { width: 13px; }
.page-nav button svg { width: 11px; height: 11px; }
.page-nav .count { width: 48px; text-align: center; }
.page-nav .flip svg { transform: scaleX(-1); }
.page-nav .page-tab { width: 38px; height: 13px; margin-left: 3px; background: #fff; border-right: 1px solid #bbb; border-radius: 0 6px 0 0; }
.hscroll { flex: 1; display: grid; grid-template-columns: 56px 161px; background: #fefefe; }
.hscroll .thumb { width: 161px; height: 12px; margin-top: 1px; background: linear-gradient(#f3f3f6, #c3c3cc); }
.doc-palette { display: flex; align-items: center; height: 16px; flex: none; border-top: 1px solid #d0d0d0; border-bottom: 1px solid #d0d0d0; padding-left: 5px; }
.doc-palette svg { width: 12px; height: 12px; }
.doc-palette .nocolor { margin-left: 14px; }
.doc-palette .nocolor svg { width: 14px; height: 14px; }
.doc-palette p { flex: 1; margin: 0; padding-right: 20px; text-align: center; font-style: italic; color: #b4b4b4; }

.dockers { width: 20px; flex: none; background: #e9e9e9; border-left: 4px solid #f8f8f8; display: flex; flex-direction: column; align-items: center; }
.grip { width: 8px; height: 10px; margin: 4px 0; }
.docker { width: 16px; height: 79px; flex-direction: column; justify-content: flex-start; gap: 3px; padding-top: 1px; background: #cce5ff; }
.docker svg { width: 13px; height: 13px; transform: rotate(90deg); }
.docker span { writing-mode: sideways-rl; }
.docker-add { margin-top: 13px; }
.palette { width: 10px; flex: none; display: flex; flex-direction: column; padding-bottom: 43px; }
.pal-head, .pal-head svg { width: 10px; height: 44px; }
.pal-none { width: 10px; height: 13px; }
.palette b { flex: 1; border-left: 1px solid #444; border-bottom: 1px solid #5558; }

.status { display: flex; align-items: center; height: 23px; flex: none; padding: 2px 0 0 3px; }
.coords { width: 65px; white-space: nowrap; }
.play svg { width: 12px; height: 12px; }
.object { margin-left: 44px; }
.attrs { display: flex; align-items: center; width: 356px; margin-left: auto; gap: 3px; }
.attrs svg { width: 14px; height: 14px; }
.attrs .bucket { margin-left: 6px; }
.attrs .gold { width: 14px; height: 13px; border: 1px solid #b98b2b; background: linear-gradient(#ffcc00, #fff08a 55%, #e08a10); }
.attrs .fill-name { width: 129px; }
.cloud { position: absolute; right: 0; bottom: 0; width: 390px; height: 180px; pointer-events: none; }
```
